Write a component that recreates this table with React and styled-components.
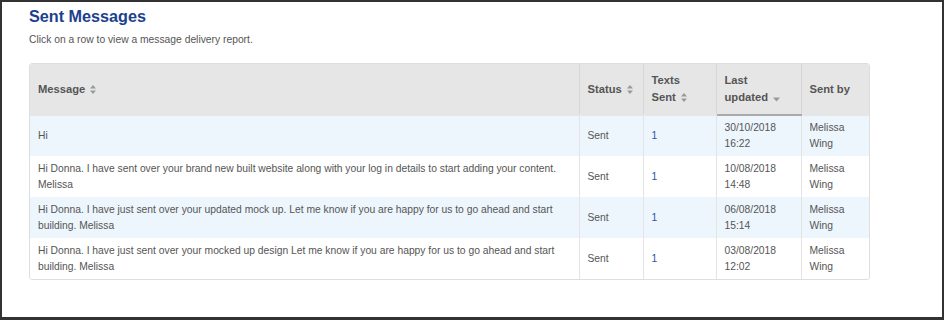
import styled, { createGlobalStyle } from 'styled-components';

const GlobalStyle = createGlobalStyle`
    html, body {
        margin: 0;
        padding: 0;
        background: #fff;
    }
    body {
        font-family: "Liberation Sans", Arial, sans-serif;
    }
`;

const Frame = styled.div`
    box-sizing: border-box;
    width: 944px;
    height: 320px;
    border: 2px solid #333;
    border-bottom-width: 3px;
    padding: 4px 0 0 27px;
    background: #fff;
`;

const Title = styled.h1`
    margin: 0;
    font-size: 16.2px;
    line-height: 20px;
    font-weight: bold;
    color: #1c3f8e;
`;

const Intro = styled.p`
    margin: 7px 0 0;
    font-size: 10.3px;
    line-height: 14px;
    color: #555;
`;

const Wrap = styled.div`
    margin-top: 16px;
    width: 839px;
    border: 1px solid #dedede;
    border-radius: 3px;
    overflow: hidden;
`;

const Table = styled.table`
    width: 100%;
    border-collapse: collapse;
    table-layout: fixed;
    font-size: 10.3px;
    line-height: 16px;
    color: #555;
`;

const Th = styled.th`
    height: 50px;
    padding: 0 8px;
    text-align: left;
    vertical-align: middle;
    font-size: 11.2px;
    line-height: 17px;
    font-weight: bold;
    background: #e6e6e6;
    border-left: 1px solid #d6d6d6;
    border-bottom: 2px solid ${({ $sorted }) => ($sorted ? '#aaa' : '#e6e6e6')};
    &:first-child {
        border-left: none;
    }
`;

const NoWrap = styled.span`
    white-space: nowrap;
`;

const Row = styled.tr`
    height: 41px;
    background: ${({ $striped }) => ($striped ? '#edf6fd' : '#fff')};
`;

const Td = styled.td`
    padding: 4px 8px;
    vertical-align: middle;
    border-left: 1px solid #e4e4e4;
    color: ${({ $link }) => ($link ? '#2a56a0' : '#555')};
    &:first-child {
        border-left: none;
    }
`;

const SortIcon = styled.svg`
    display: inline-block;
    margin-left: 5px;
    vertical-align: -1px;
`;

const Both = () => (
    <SortIcon width="6" height="9" viewBox="0 0 6 9">
        <path d="M3 0L6 3.6H0z M3 9L0 5.4H6z" fill="#999" />
    </SortIcon>
);

const Down = () => (
    <SortIcon width="7" height="5" viewBox="0 0 7 5">
        <path d="M0 0.5H7L3.5 4.5z" fill="#999" />
    </SortIcon>
);

// last word keeps its sort icon on the same line
const HeadLabel = ({ text, icon }) => {
    const words = text.split(' ');
    const last = words.pop();
    return (
        <>
            {words.length > 0 && words.join(' ') + ' '}
            <NoWrap>
                {last}
                {icon}
            </NoWrap>
        </>
    );
};

const rows = [
    ['Hi', '30/10/2018', '16:22'],
    [
        'Hi Donna. I have sent over your brand new built website along with your log in details to start adding your content. Melissa',
        '10/08/2018',
        '14:48'
    ],
    [
        'Hi Donna. I have just sent over your updated mock up. Let me know if you are happy for us to go ahead and start building. Melissa',
        '06/08/2018',
        '15:14'
    ],
    [
        'Hi Donna. I have just sent over your mocked up design Let me know if you are happy for us to go ahead and start building. Melissa',
        '03/08/2018',
        '12:02'
    ]
];

export default function App() {
    return (
        <Frame>
            <GlobalStyle />
            <Title>Sent Messages</Title>
            <Intro>Click on a row to view a message delivery report.</Intro>
            <Wrap>
                <Table>
                    <colgroup>
                        <col style={{ width: 549 }} />
                        <col style={{ width: 64 }} />
                        <col style={{ width: 73 }} />
                        <col style={{ width: 85 }} />
                        <col />
                    </colgroup>
                    <thead>
                        <tr>
                            <Th>
                                <HeadLabel text="Message" icon={<Both />} />
                            </Th>
                            <Th>
                                <HeadLabel text="Status" icon={<Both />} />
                            </Th>
                            <Th>
                                <HeadLabel text="Texts Sent" icon={<Both />} />
                            </Th>
                            <Th $sorted>
                                <HeadLabel text="Last updated" icon={<Down />} />
                            </Th>
                            <Th>Sent by</Th>
                        </tr>
                    </thead>
                    <tbody>
                        {rows.map(([msg, date, time], i) => (
                            <Row key={date} $striped={i % 2 === 0}>
                                <Td>{msg}</Td>
                                <Td>Sent</Td>
                                <Td $link>1</Td>
                                <Td>
                                    {date}
                                    <br />
                                    {time}
                                </Td>
                                <Td>Melissa Wing</Td>
                            </Row>
                        ))}
                    </tbody>
                </Table>
            </Wrap>
        </Frame>
    );
}
